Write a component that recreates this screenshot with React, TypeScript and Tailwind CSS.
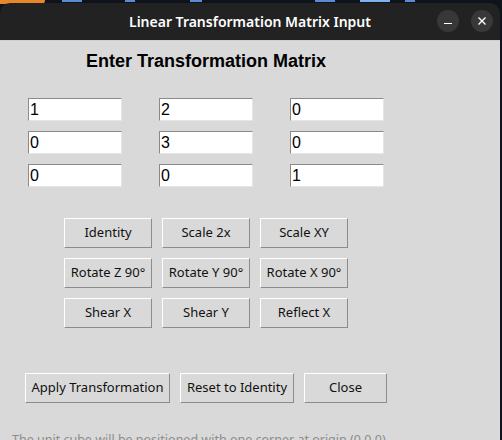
import React from "react";

const matrix = [
  ["1", "2", "0"],
  ["0", "3", "0"],
  ["0", "0", "1"],
];

const presets = [
  "Identity",
  "Scale 2x",
  "Scale XY",
  "Rotate Z 90°",
  "Rotate Y 90°",
  "Rotate X 90°",
  "Shear X",
  "Shear Y",
  "Reflect X",
];

function TkButton({ label, w }: { label: string; w: string }) {
  return (
    <button
      className={`${w} h-[30px] bg-[#d9d9d9] border border-t-white border-l-white border-b-[#8c8c8c] border-r-[#8c8c8c] text-[13px] text-[#111] flex items-center justify-center`}
      style={{ fontFamily: '"Noto Sans", "Open Sans", sans-serif' }}
    >
      {label}
    </button>
  );
}

export default function App() {
  return (
    <div className="w-[502px] h-[440px] overflow-hidden bg-[#0e131c] relative">
      <div className="absolute left-0 top-0 w-[45px] h-[4px] bg-[#e8862a] rounded-br-[4px]" />
      <div className="absolute left-[62px] top-0 w-[20px] h-[2px] bg-[#5b8ad6]" />
      <div className="absolute left-[125px] top-0 w-[10px] h-[2px] bg-[#5b8ad6]" />
      <div className="absolute left-[190px] top-0 w-[12px] h-[2px] bg-[#5b8ad6]" />
      <div className="absolute left-[315px] top-0 w-[20px] h-[2px] bg-[#5b8ad6]" />
      <div className="absolute left-[360px] top-0 w-[30px] h-[2px] bg-[#7fb0f0]" />
      <div className="absolute left-[405px] top-0 w-[10px] h-[2px] bg-[#5b8ad6]" />
      <div className="pt-[3px] w-[500px] h-full flex flex-col">
        {/* title bar */}
        <div className="h-[37px] bg-[#222222] rounded-t-[10px] flex items-center relative shrink-0">
          <div
            className="w-full text-center text-white text-[14px] font-semibold"
            style={{ fontFamily: '"Noto Sans", "Open Sans", sans-serif' }}
          >
            Linear Transformation Matrix Input
          </div>
          <div className="absolute right-[7px] top-[7px] flex gap-[12px]">
            <div className="w-[22px] h-[22px] rounded-full bg-[#383838] flex items-center justify-center">
              <div className="w-[8px] h-[1.5px] bg-white mt-[5px]" />
            </div>
            <div className="w-[22px] h-[22px] rounded-full bg-[#383838] flex items-center justify-center">
              <svg width="10" height="10" viewBox="0 0 10 10">
                <path d="M1.5 1.5 L8.5 8.5 M8.5 1.5 L1.5 8.5" stroke="white" strokeWidth="1.4" />
              </svg>
            </div>
          </div>
        </div>
        {/* content */}
        <div className="flex-1 bg-[#d9d9d9] border-t border-[#cfcfcf] flex flex-col">
          <div className="w-[412px]">
            <div
              className="mt-[10px] h-[21px] text-center text-[18px] font-bold text-black leading-[21px]"
              style={{ fontFamily: '"Liberation Sans", Arial, sans-serif' }}
            >
              Enter Transformation Matrix
            </div>
            <div className="mt-[26px] ml-[28px] grid grid-cols-[94px_94px_94px] gap-x-[37px] gap-y-[10px]">
              {matrix.flat().map((v, i) => (
                <div
                  key={i}
                  className="h-[23px] bg-white border border-t-[#8a8a8a] border-l-[#8a8a8a] border-b-[#e6e6e6] border-r-[#e6e6e6] pl-[1px] text-[16px] leading-[21px] text-black"
                  style={{ fontFamily: '"Liberation Sans", Arial, sans-serif' }}
                >
                  {v}
                </div>
              ))}
            </div>
            <div className="mt-[31px] ml-[64px] grid grid-cols-[88px_88px_88px] gap-x-[10px] gap-y-[10px]">
              {presets.map((p) => (
                <TkButton key={p} label={p} w="w-[88px]" />
              ))}
            </div>
            <div className="mt-[45px] ml-[25px] flex gap-[10px]">
              <TkButton label="Apply Transformation" w="w-[145px]" />
              <TkButton label="Reset to Identity" w="w-[114px]" />
              <TkButton label="Close" w="w-[83px]" />
            </div>
          </div>
          <div
            className="mt-[29px] ml-[12px] text-[12.5px] leading-[16px] text-[#8c8c8c] whitespace-nowrap"
            style={{ fontFamily: '"Noto Sans", "Open Sans", sans-serif' }}
          >
            The unit cube will be positioned with one corner at origin (0,0,0).
          </div>
        </div>
      </div>
      <div className="absolute right-0 top-0 w-[2px] h-full bg-[#0e131c]" />
    </div>
  );
}
